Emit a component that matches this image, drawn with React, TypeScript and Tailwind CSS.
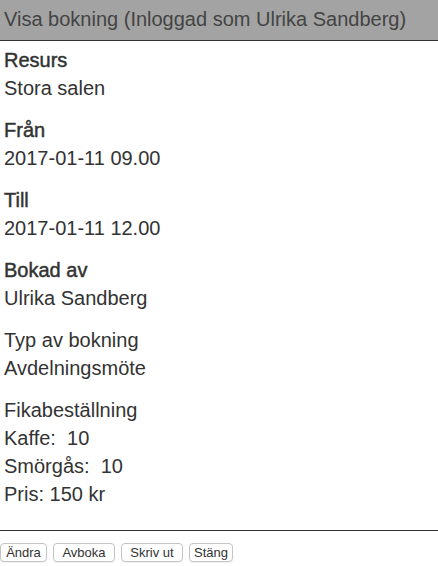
import React from "react";

const sections: { label: string; bold: boolean; lines: string[] }[] = [
  { label: "Resurs", bold: true, lines: ["Stora salen"] },
  { label: "Från", bold: true, lines: ["2017-01-11 09.00"] },
  { label: "Till", bold: true, lines: ["2017-01-11 12.00"] },
  { label: "Bokad av", bold: true, lines: ["Ulrika Sandberg"] },
  { label: "Typ av bokning", bold: false, lines: ["Avdelningsmöte"] },
  { label: "Fikabeställning", bold: false, lines: ["Kaffe:  10", "Smörgås:  10", "Pris: 150 kr"] },
];

const buttons = [
  { text: "Ändra", w: "w-[47px]" },
  { text: "Avboka", w: "w-[62px]" },
  { text: "Skriv ut", w: "w-[62px]" },
  { text: "Stäng", w: "w-[44px]" },
];

export default function App() {
  return (
    <div className="w-[438px] h-[566px] bg-white text-[#333] font-['Liberation_Sans',Arial,sans-serif] overflow-hidden">
      <div className="h-[41px] bg-[#a3a3a3] border-b border-[#333] px-[4px] pt-[8px] text-[20px] leading-[23px] text-[#444] whitespace-nowrap">
        Visa bokning (Inloggad som Ulrika Sandberg)
      </div>

      <div className="px-[4px] pt-[5px] text-[20px] leading-[28px]">
        {sections.map((s) => (
          <div key={s.label} className="mb-[14px] last:mb-0">
            <div className={s.bold ? "[-webkit-text-stroke:0.45px_#333]" : ""}>{s.label}</div>
            {s.lines.map((l) => (
              <div key={l} className="whitespace-pre">{l}</div>
            ))}
          </div>
        ))}
      </div>

      <div className="mt-[22px] border-t border-[#333] pt-[12px] flex gap-[6px]">
        {buttons.map((b) => (
          <button
            key={b.text}
            className={`${b.w} h-[19px] bg-white border border-[#c4c4c4] rounded-[4px] text-[13px] leading-[17px] text-[#333] shadow-[0_1px_1px_rgba(0,0,0,0.06)]`}
          >
            {b.text}
          </button>
        ))}
      </div>
    </div>
  );
}
